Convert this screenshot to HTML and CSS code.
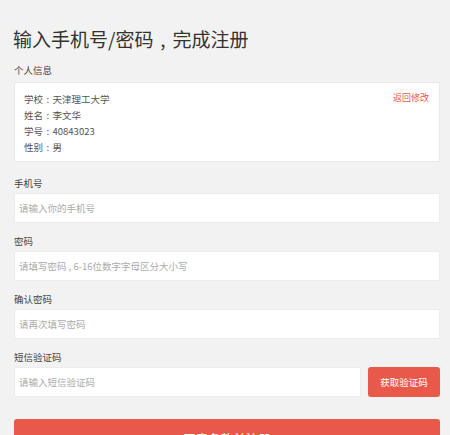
FILE: index.html
```html
<!DOCTYPE html>
<html lang="zh">
<head>
<meta charset="utf-8">
<link rel="stylesheet" href="styles.css">
</head>
<body>
<div class="page">
  <h1 class="title">输入手机号/密码<span class="punct">,</span>完成注册</h1>
  <div class="section-label">个人信息</div>
  <div class="info-card">
    <div class="info-lines">
      <div>学校<span class="punct">:</span>天津理工大学</div>
      <div>姓名<span class="punct">:</span>李文华</div>
      <div>学号<span class="punct">:</span>40843023</div>
      <div>性别<span class="punct">:</span>男</div>
    </div>
    <a class="edit-link">返回修改</a>
  </div>
  <div class="group first">
    <div class="label">手机号</div>
    <input class="field" placeholder="请输入你的手机号">
  </div>
  <div class="group">
    <div class="label">密码</div>
    <input class="field" placeholder="请填写密码 , 6-16位数字字母区分大小写">
  </div>
  <div class="group">
    <div class="label">确认密码</div>
    <input class="field" placeholder="请再次填写密码">
  </div>
  <div class="group">
    <div class="label">短信验证码</div>
    <div class="code-row">
      <input class="field code" placeholder="请输入短信验证码">
      <button class="code-btn">获取验证码</button>
    </div>
  </div>
  <button class="submit">同意条款并注册</button>
</div>
</body>
</html>
```

FILE: styles.css
```css
html, body {
  margin: 0;
  padding: 0;
  background: #f2f2f2;
}
body {
  font-family: "Noto Sans CJK SC", "Noto Sans", sans-serif;
  color: #333;
}
.page {
  width: 426px;
  margin-left: 14px;
  padding-top: 26px;
}
.punct {
  display: inline-block;
  width: 1em;
  text-align: center;
}
.title {
  margin: 0 0 0 -1px;
  font-size: 19px;
  line-height: 26px;
  font-weight: normal;
  color: #333;
}
.section-label {
  margin-top: 11px;
  font-size: 9.5px;
  line-height: 14px;
  color: #444;
}
.info-card {
  margin-top: 5px;
  background: #fff;
  border: 1px solid #e9e9e9;
  padding: 8px 10px 6px 9px;
  display: flex;
  justify-content: space-between;
  align-items: flex-start;
}
.info-lines {
  font-size: 9.5px;
  line-height: 16px;
  color: #555;
}
.edit-link {
  font-size: 9px;
  line-height: 14px;
  color: #e8594a;
  margin-top: 0;
}
.group {
  margin-top: 11px;
}
.group.first {
  margin-top: 14px;
}
.label {
  font-size: 9.5px;
  line-height: 14px;
  color: #444;
  margin-bottom: 3px;
}
.field {
  display: block;
  box-sizing: border-box;
  width: 100%;
  height: 30px;
  margin: 0;
  border: 1px solid #ececec;
  background: #fff;
  padding: 0 4px;
  font-family: "Noto Sans CJK SC", "Noto Sans", sans-serif;
  font-size: 9.5px;
  color: #333;
  outline: none;
}
.field::placeholder {
  color: #ababab;
}
.code-row {
  display: flex;
  gap: 7px;
}
.field.code {
  flex: 1;
  width: auto;
}
.code-btn {
  width: 72px;
  height: 30px;
  margin: 0;
  border: none;
  border-radius: 3px;
  background: #e8594a;
  color: #fff;
  font-family: "Noto Sans CJK SC", "Noto Sans", sans-serif;
  font-size: 9.5px;
  padding: 0;
}
.submit {
  display: block;
  width: 100%;
  height: 38px;
  margin-top: 22px;
  border: none;
  border-radius: 3px;
  background: #e8594a;
  color: #fff;
  font-family: "Noto Sans CJK SC", "Noto Sans", sans-serif;
  font-size: 12.5px;
  padding: 0;
}
```
